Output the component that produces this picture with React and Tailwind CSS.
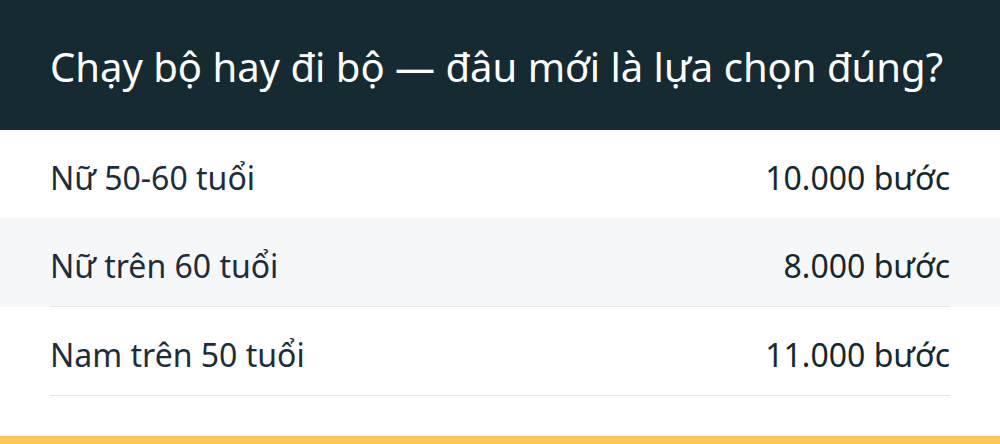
const rows = [
  { label: "Nữ 50-60 tuổi", value: "10.000 bước" },
  { label: "Nữ trên 60 tuổi", value: "8.000 bước" },
  { label: "Nam trên 50 tuổi", value: "11.000 bước" },
];

const App = () => {
  return (
    <div
      className="w-[1000px] h-[444px] bg-white flex flex-col overflow-hidden"
      style={{ fontFamily: '"Noto Sans", sans-serif' }}
    >
      <div className="h-[130px] bg-[#162b31] px-[50px] pt-[4px] flex items-center">
        <h1 className="text-white text-[40px] leading-none font-normal">
          Chạy bộ hay đi bộ — đâu mới là lựa chọn đúng?
        </h1>
      </div>
      <div className="flex flex-col">
        {rows.map((r, i) => (
          <div key={i} className={i === 1 ? "bg-[#f6f7f9]" : "bg-white"}>
            <div
              className={
                "mx-[50px] pt-[7px] flex items-center justify-between text-[32px] leading-none " +
                (i > 0 ? "h-[89px] border-b border-[#e2e7ec]" : "h-[88px]")
              }
            >
              <span className="text-[#1e2d3b]">{r.label}</span>
              <span className="text-[#14292e]">{r.value}</span>
            </div>
          </div>
        ))}
      </div>
      <div className="flex-1" />
      <div className="h-[8px] bg-[#fec655]" />
    </div>
  );
};

export default App;
